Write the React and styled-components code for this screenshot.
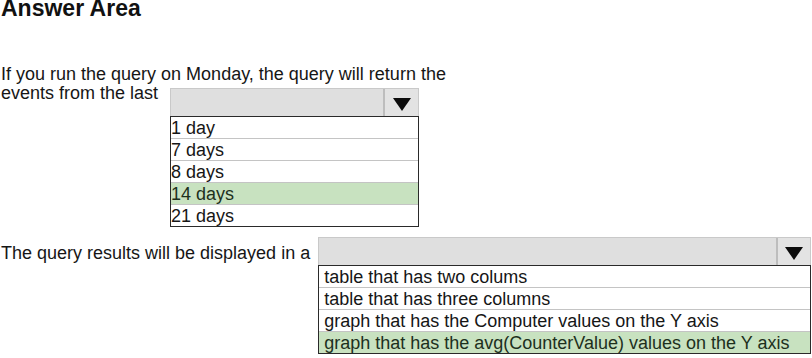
import styled, { createGlobalStyle } from "styled-components";

const GlobalStyle = createGlobalStyle`
  body {
    margin: 0;
    background: #ffffff;
    font-family: "Liberation Sans", Arial, sans-serif;
    color: #161616;
  }
`;

const Page = styled.div`
  width: 812px;
  height: 358px;
  padding-left: 1px;
  box-sizing: border-box;
  overflow: hidden;
`;

const Title = styled.h1`
  margin: -3px 0 0;
  font-size: 23px;
  line-height: 23px;
  font-weight: 700;
  color: #111;
`;

const Question = styled.div`
  display: flex;
  flex-direction: column;
  margin-top: ${(p) => p.$top}px;
`;

const Line = styled.div`
  font-size: 18px;
  line-height: 19px;
  white-space: nowrap;
`;

const Row = styled.div`
  display: flex;
  align-items: flex-start;
  gap: ${(p) => p.$gap}px;
`;

const Label = styled.span`
  font-size: 18px;
  line-height: 19px;
  white-space: nowrap;
  margin-top: ${(p) => p.$offset}px;
`;

const Select = styled.div`
  display: flex;
  flex-direction: column;
  width: ${(p) => p.$width}px;
  margin-top: ${(p) => p.$offset}px;
`;

const Combo = styled.div`
  display: flex;
  height: 28px;
  box-sizing: border-box;
  background: #dfdfdf;
  border: 1px solid #c9c9c9;
  border-bottom: none;
`;

const ComboField = styled.div`
  flex: 1;
`;

const ArrowCell = styled.div`
  width: ${(p) => p.$width}px;
  display: flex;
  justify-content: center;
  align-items: center;
  padding-top: 4px;
  box-sizing: border-box;
  border-left: 2px solid #bdbdbd;
  background: #e3e3e3;
`;

const Arrow = styled.div`
  width: 0;
  height: 0;
  border-left: 9px solid transparent;
  border-right: 9px solid transparent;
  border-top: 13px solid #0c0c0c;
`;

const List = styled.div`
  border: 1px solid #2a2a2a;
  background: #fff;
`;

const Option = styled.div`
  height: ${(p) => p.$h}px;
  box-sizing: border-box;
  padding: 2px 0 0 ${(p) => p.$inset}px;
  font-size: 18px;
  line-height: 19px;
  white-space: nowrap;
  background: ${(p) => (p.$picked ? "#c8e2c0" : "#ffffff")};
  color: ${(p) => (p.$picked ? "#1d301d" : "#161616")};
  & + & {
    border-top: 1px solid #c4c4c4;
  }
`;

const DropDown = ({ width, arrow, options, picked, inset, offset = 0 }) => (
  <Select $width={width} $offset={offset}>
    <Combo>
      <ComboField />
      <ArrowCell $width={arrow}>
        <Arrow />
      </ArrowCell>
    </Combo>
    <List>
      {options.map((o, i) => (
        <Option key={o} $picked={o === picked} $inset={inset} $h={i === 0 ? 21 : 22}>
          {o}
        </Option>
      ))}
    </List>
  </Select>
);

const days = ["1 day", "7 days", "8 days", "14 days", "21 days"];
const views = [
  "table that has two colums",
  "table that has three columns",
  "graph that has the Computer values on the Y axis",
  "graph that has the avg(CounterValue) values on the Y axis",
];

export default function App() {
  return (
    <Page>
      <GlobalStyle />
      <Title>Answer Area</Title>
      <Question $top={45}>
        <Line>If you run the query on Monday, the query will return the</Line>
        <Row $gap={12}>
          <Label $offset={0}>events from the last</Label>
          <DropDown width={249} arrow={35} options={days} picked="14 days" inset={0} offset={4} />
        </Row>
      </Question>
      <Question $top={10}>
        <Row $gap={8}>
          <Label $offset={7}>The query results will be displayed in a</Label>
          <DropDown
            width={493}
            arrow={34}
            options={views}
            picked="graph that has the avg(CounterValue) values on the Y axis"
            inset={5}
          />
        </Row>
      </Question>
    </Page>
  );
}
